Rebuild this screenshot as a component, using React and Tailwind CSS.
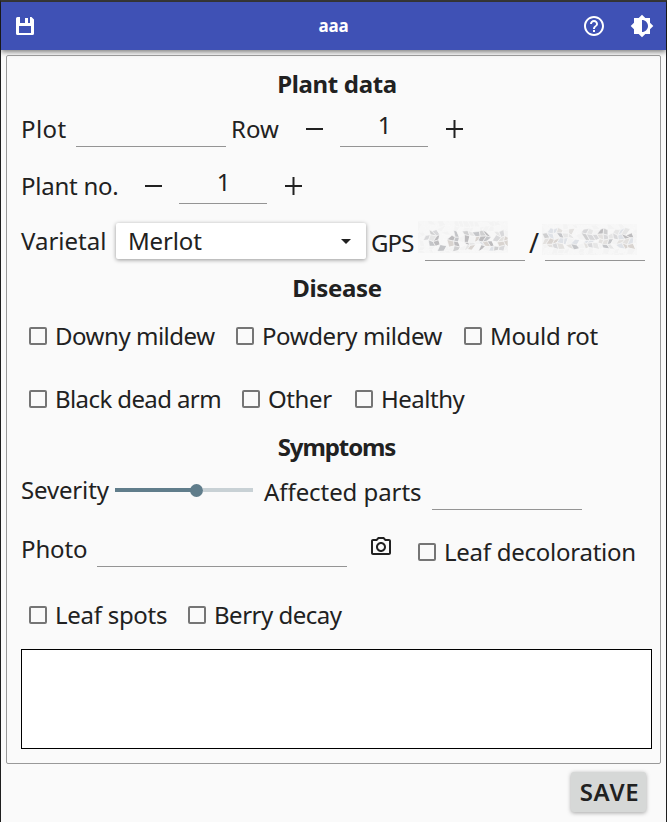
import React from "react";
import { MdHelpOutline, MdBrightness6, MdOutlinePhotoCamera, MdArrowDropDown } from "react-icons/md";

function Label({ className = "", children }) {
  return <span className={`block h-8 shrink-0 whitespace-nowrap text-[24px] leading-8 ${className}`}>{children}</span>;
}

function Heading({ className = "", children }) {
  return (
    <h2 className={`h-[34px] whitespace-nowrap text-center text-[24px] font-bold leading-8 ${className}`}>
      {children}
    </h2>
  );
}

function Field({ className = "", children }) {
  return (
    <div className={`h-[34px] shrink-0 border-b border-[#949494] text-center text-[24px] leading-6 ${className}`}>
      {children}
    </div>
  );
}

function Minus({ className = "" }) {
  return (
    <button aria-label="decrease" className={`flex h-8 w-[18px] shrink-0 items-center ${className}`}>
      <span className="block h-0.5 w-[17px] bg-[#212121]" />
    </button>
  );
}

function Plus({ className = "" }) {
  return (
    <button aria-label="increase" className={`h-8 w-[18px] shrink-0 ${className}`}>
      <svg width="18" height="32" viewBox="0 0 18 32" fill="#212121">
        <path d="M7.500 7h2v8h7.500v2h-7.500v8h-2v-8H0v-2h7.500z" />
      </svg>
    </button>
  );
}

function Check({ width, className = "", children }) {
  return (
    <label className={`flex shrink-0 items-start ${width}`}>
      <span className="mt-[7px] block h-[18px] w-[18px] shrink-0 rounded-[2px] border-2 border-[#757575]" />
      <Label className={`ml-2 ${className}`}>{children}</Label>
    </label>
  );
}

// Crystallised patch that hides a coordinate: jittered cells, darker along the digit strokes.
const SHADES = ["#c4c5c8", "#d8d8da", "#e3e1df", "#bdbcbe", "#dfe2e7", "#cfcfd0", "#e6e6e6", "#d9d4d0"];
const noise = (n) => {
  const v = Math.sin(n * 127.1 + 11.7) * 43758.5453;
  return v - Math.floor(v);
};
function Mosaic({ className, w, h, rows, seed }) {
  const cols = Math.ceil(w / 5);
  const lines = Math.ceil(h / 5);
  const point = (i, j) => {
    const k = seed + i * 31 + j * 7;
    return [
      Math.min(w, Math.max(0, i * 5 + (j % 2) * 2.5 + (noise(k) - 0.5) * 3)),
      Math.min(h, Math.max(0, j * 5 + (noise(k + 0.5) - 0.5) * 3)),
    ];
  };
  const cells = [];
  for (let j = 0; j < lines; j++) {
    for (let i = 0; i < cols; i++) {
      const inked = rows[j] && rows[j][i] === "#";
      const r = noise(seed + i * 13 + j * 57);
      const fill = inked ? SHADES[Math.floor(r * SHADES.length)] : r > 0.5 ? "#f3f3f3" : "#f7f7f7";
      const pts = [point(i, j), point(i + 1, j), point(i + 1, j + 1), point(i, j + 1)];
      cells.push(<polygon key={`${i}-${j}`} points={pts.map((p) => p.join(",")).join(" ")} fill={fill} stroke="#f9f9f9" strokeWidth="0.6" />);
    }
  }
  return (
    <svg className={className} width={w} height={h} viewBox={`0 0 ${w} ${h}`}>
      <rect width={w} height={h} fill="#f5f5f5" />
      {cells}
    </svg>
  );
}

const LAT = [
  "                  ",
  "                  ",
  "  ##   # ##### ## ",
  " ###  ## # ### ###",
  "  ##  ## ## ### ##",
  "    #  # ## # ### ",
  "                  ",
];
const LON = [
  "                   ",
  " ### #  ## ## ###  ",
  "## ###  ########## ",
  "##### # ## ### ### ",
  " ### ## ### ## ### ",
  "                   ",
  "                   ",
];

export default function App() {
  return (
    <div className="flex h-[822px] w-[667px] flex-col border-x border-t-2 border-x-[#1f1f1f] border-t-[#383838] bg-[#fafafa] font-['Noto_Sans','Open_Sans',sans-serif] text-[#212121]">
      <header className="flex h-12 shrink-0 items-center bg-[#3f51b5] pl-3 pr-3 text-white shadow-[0_2px_5px_rgba(0,0,0,0.5)]">
        <svg width="24" height="24" viewBox="0 0 24 24" fill="currentColor">
          <path
            fillRule="evenodd"
            d="M4.500 3H7v6h5V4h3v5h2V3h1.500L21 5.500v14a1.500 1.500 0 0 1-1.500 1.500h-15A1.500 1.500 0 0 1 3 19.500v-15A1.500 1.500 0 0 1 4.500 3zM6 12v7h12v-7z"
          />
        </svg>
        <h1 className="grow pl-[48px] text-center text-[17px] font-bold leading-6 tracking-[-0.18px]">aaa</h1>
        <MdHelpOutline size={24} />
        <MdBrightness6 size={24} className="ml-6" />
      </header>

      <main className="ml-[5px] mt-[5px] flex h-[709px] w-[655px] shrink-0 flex-col rounded-[2px] border border-[#999] pl-[14px]">
        <Heading className="mt-3 pr-[7px] tracking-[-0.35px]">Plant data</Heading>

        <div className="mt-[11px] flex h-[34px]">
          <Label className="w-[55px] tracking-[0.42px]">Plot</Label>
          <Field className="w-[150px]" />
          <Label className="ml-[5px] w-[75px]">Row</Label>
          <Minus />
          <Field className="ml-4 w-[88px] pl-px">1</Field>
          <Plus className="ml-[18px]" />
        </div>

        <div className="mt-[23px] flex h-[34px]">
          <Label className="w-[124px] tracking-[-0.25px]">Plant no.</Label>
          <Minus />
          <Field className="ml-4 w-[88px] pl-px">1</Field>
          <Plus className="ml-[18px]" />
        </div>

        <div className="mt-[18px] flex h-[39px]">
          <Label className="mt-[3px] w-[95px]">Varietal</Label>
          <div className="mt-[1px] flex h-9 w-[250px] shrink-0 items-center rounded-[2px] bg-white pl-3 pr-[8px] shadow-[0_1px_4px_rgba(0,0,0,0.4)]">
            <Label className="grow tracking-[-0.15px]">Merlot</Label>
            <MdArrowDropDown size={24} />
          </div>
          <Label className="ml-[5px] mt-[5px] w-[54px] tracking-[-0.9px]">GPS</Label>
          <div className="relative h-[39px] w-[100px] shrink-0 border-b border-[#949494]">
            <Mosaic className="absolute -left-[7px] -top-[1px]" w={90} h={32} rows={LAT} seed={3} />
          </div>
          <Label className="ml-[4px] mt-[5px] w-4 text-[27px]">/</Label>
          <div className="relative h-[39px] w-[100px] shrink-0 border-b border-[#949494]">
            <Mosaic className="absolute -left-[3px] top-[2px]" w={95} h={31} rows={LON} seed={41} />
          </div>
        </div>

        <Heading className="mt-[11px] pr-[7px] tracking-[-0.34px]">Disease</Heading>

        <div className="mt-[14px] flex h-[34px] pl-2">
          <Check width="w-[207px]" className="tracking-[-0.47px]">Downy mildew</Check>
          <Check width="w-[228px]" className="tracking-[-0.4px]">Powdery mildew</Check>
          <Check width="w-[140px]" className="tracking-[-0.35px]">Mould rot</Check>
        </div>

        <div className="mt-[29px] flex h-[34px] pl-2">
          <Check width="w-[213px]" className="tracking-[-0.6px]">Black dead arm</Check>
          <Check width="w-[113px]" className="tracking-[-0.4px]">Other</Check>
          <Check width="w-[120px]" className="tracking-[-0.5px]">Healthy</Check>
        </div>

        <Heading className="mt-[14px] pr-[8px] tracking-[-1.1px]">Symptoms</Heading>

        <div className="mt-[9px] flex h-9">
          <Label className="w-[94px] tracking-[-0.15px]">Severity</Label>
          <div className="mt-[9px] flex h-[14px] w-[138px] shrink-0 items-center">
            <span className="h-1 w-[76px] bg-[#607d8b]" />
            <span className="-ml-px h-[13px] w-[13px] rounded-full bg-[#607d8b]" />
            <span className="h-1 grow bg-[#c8d1d5]" />
          </div>
          <Label className="ml-[11px] mt-[2px] w-[168px] tracking-[-0.07px]">Affected parts</Label>
          <Field className="mt-[2px] w-[150px]" />
        </div>

        <div className="mt-[23px] flex h-[34px]">
          <Label className="w-[76px] tracking-[-0.13px]">Photo</Label>
          <Field className="w-[250px]" />
          <MdOutlinePhotoCamera size={24} className="ml-[22px] mt-[2px] shrink-0" />
          <div className="ml-[25px] mt-[3px] flex">
            <Check width="w-[220px]" className="tracking-[-0.26px]">Leaf decoloration</Check>
          </div>
        </div>

        <div className="mt-8 flex h-[34px] pl-2">
          <Check width="w-[159px]" className="tracking-[-0.28px]">Leaf spots</Check>
          <Check width="w-[160px]" className="tracking-[-0.5px]">Berry decay</Check>
        </div>

        <div className="mt-4 h-[100px] w-[631px] shrink-0 border border-black bg-white" />
      </main>

      <button className="ml-auto mr-5 mt-2 flex h-10 w-[75px] shrink-0 items-center justify-center rounded-[3px] bg-[#d6d8d7] pl-[2px] text-[24px] font-semibold leading-8 tracking-[0.7px] shadow-[0_1px_4px_rgba(0,0,0,0.35)]">
        SAVE
      </button>
    </div>
  );
}
